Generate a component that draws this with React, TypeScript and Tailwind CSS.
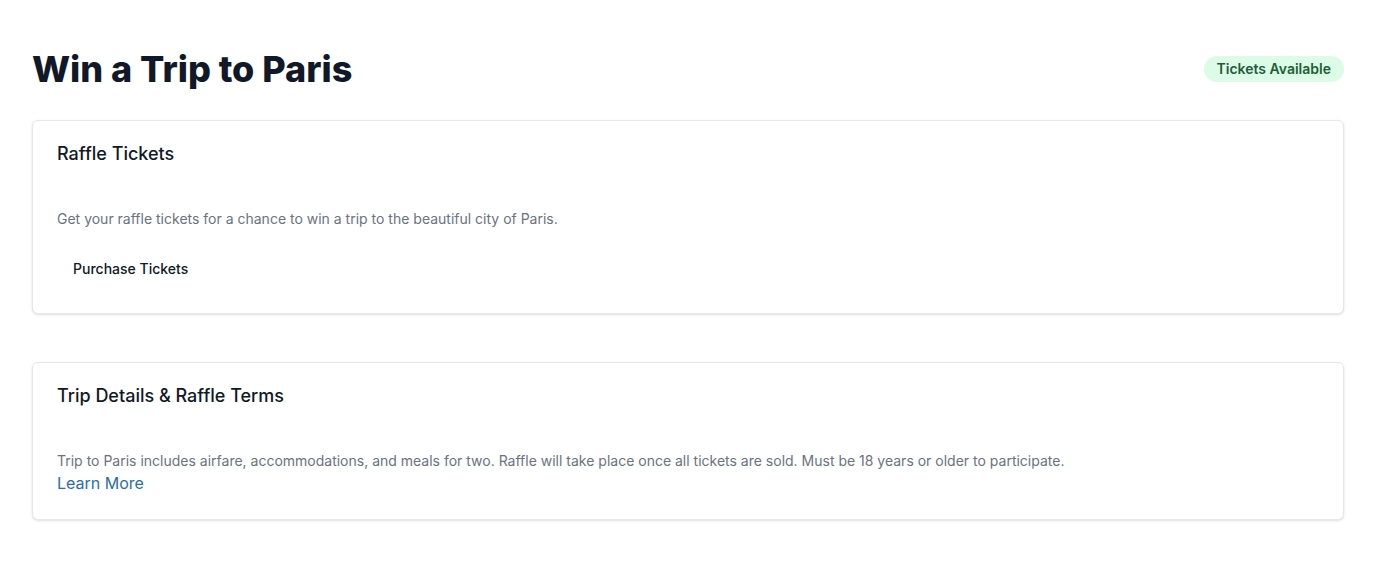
import React from "react";

function Card({ title, children }: { title: string; children: React.ReactNode }) {
  return (
    <div className="rounded-md border border-[#e5e7eb] bg-white shadow-sm">
      <div className="px-6 pt-6 pb-[46px]">
        <h2 className="text-lg font-medium leading-none text-[#111827]">{title}</h2>
      </div>
      <div className="px-6 pb-6">{children}</div>
    </div>
  );
}

export default function App() {
  return (
    <div
      className="min-h-screen bg-white px-8 pt-[49px] pb-12"
      style={{ fontFamily: "Inter, 'Noto Sans', sans-serif" }}
    >
      <div className="flex items-center justify-between">
        <h1 className="text-4xl font-extrabold text-[#111827]">Win a Trip to Paris</h1>
        <span className="rounded-full bg-[#dcfce7] px-[13px] py-[3px] text-sm font-semibold text-[#1d5e38]">
          Tickets Available
        </span>
      </div>

      <div className="mt-[31px] flex flex-col gap-12">
        <Card title="Raffle Tickets">
          <p className="text-sm text-[#6b7280]">
            Get your raffle tickets for a chance to win a trip to the beautiful city of Paris.
          </p>
          <button className="mt-5 flex h-10 items-center rounded-md px-4 text-sm font-medium text-[#111827]">
            Purchase Tickets
          </button>
        </Card>

        <Card title="Trip Details &amp; Raffle Terms">
          <p className="text-sm text-[#6b7280]">
            Trip to Paris includes airfare, accommodations, and meals for two. Raffle will take place once all tickets are sold. Must be 18 years or older to participate.
          </p>
          <a href="#" className="block w-fit text-base text-[#2b6cb0]">
            Learn More
          </a>
        </Card>
      </div>
    </div>
  );
}
